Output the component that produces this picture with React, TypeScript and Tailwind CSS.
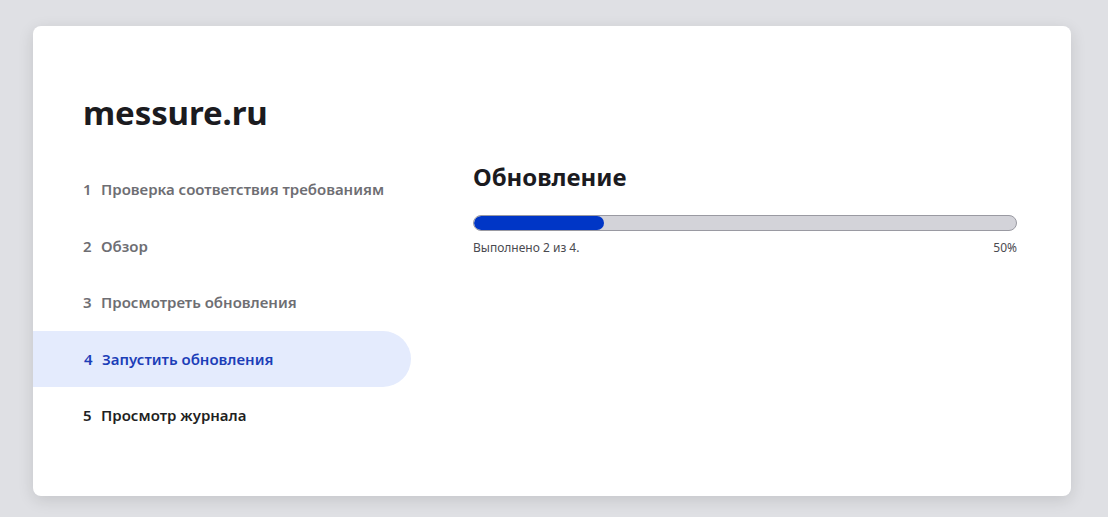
import React from "react";

const steps = [
  { n: 1, label: "Проверка соответствия требованиям", state: "done" },
  { n: 2, label: "Обзор", state: "done" },
  { n: 3, label: "Просмотреть обновления", state: "done" },
  { n: 4, label: "Запустить обновления", state: "active" },
  { n: 5, label: "Просмотр журнала", state: "todo" },
];

export default function App() {
  return (
    <div
      className="w-[1108px] h-[517px] bg-[#dfe0e4] pt-[26px] pl-[33px]"
      style={{ fontFamily: '"Noto Sans", "Open Sans", sans-serif' }}
    >
      <div className="w-[1038px] h-[470px] bg-white rounded-[8px] shadow-[0_4px_16px_rgba(0,0,0,0.12)] pt-[67px] pb-[50px] flex flex-col">
        <div className="pl-[50px] text-[33px] leading-[40px] font-bold text-[#1b1b1f] tracking-[-0.1px]">
          messure.ru
        </div>
        <div className="flex mt-[28px]">
          <div className="w-[378px] flex flex-col">
            {steps.map((s) => (
              <div
                key={s.n}
                className={
                  s.state === "active"
                    ? "h-[56.5px] flex items-center pl-[51px] bg-[#e4ebfd] rounded-r-full text-[#1c3eb8] text-[15px] font-semibold"
                    : s.state === "done"
                    ? "h-[56.5px] flex items-center pl-[50px] text-[#6e6e73] text-[15px] font-semibold"
                    : "h-[56.5px] flex items-center pl-[50px] text-[#1f1f23] text-[15px] font-semibold"
                }
              >
                <span className="w-[18px]">{s.n}</span>
                <span>{s.label}</span>
              </div>
            ))}
          </div>
          <div className="flex-1 pl-[62px] pr-[54px] flex flex-col">
            <div className="text-[24px] leading-[32px] font-bold text-[#1b1b1f]">Обновление</div>
            <div className="mt-[22px] h-[16px] rounded-full bg-[#d3d3d9] border border-[#9a9aa2] overflow-hidden">
              <div className="h-full w-[24%] bg-[#0036c6] rounded-full" />
            </div>
            <div className="mt-[9px] flex justify-between text-[12px] leading-[16px] text-[#4a4a50]">
              <span>Выполнено 2 из 4.</span>
              <span>50%</span>
            </div>
          </div>
        </div>
      </div>
    </div>
  );
}
